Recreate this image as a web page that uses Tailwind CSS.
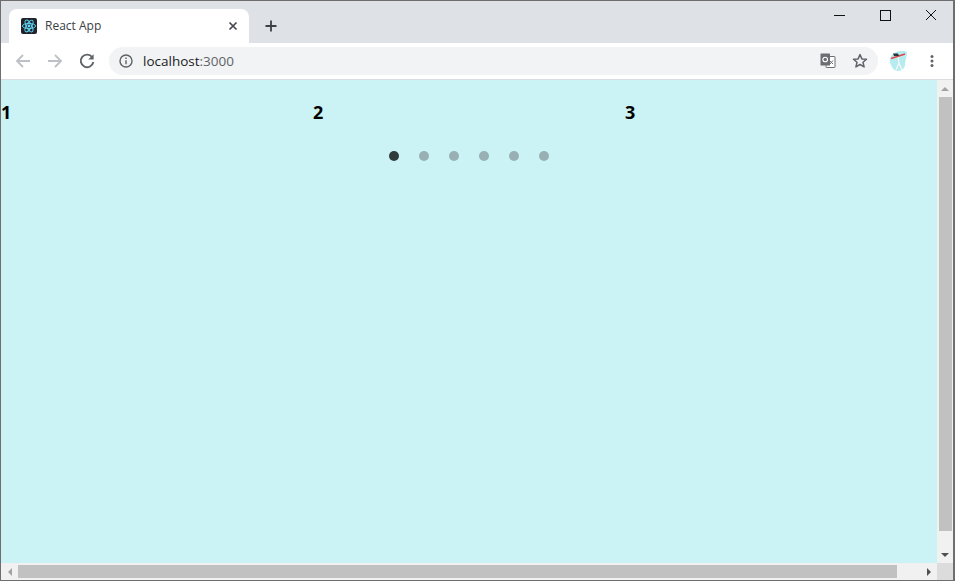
<!DOCTYPE html>
<html lang="en">
<head>
  <meta charset="utf-8" />
  <title>React App</title>
  <script src="https://cdn.jsdelivr.net/npm/@tailwindcss/browser@4"></script>
</head>
<body class="overflow-hidden bg-white">
  <div class="flex h-[581px] w-[955px] flex-col border border-r-2 border-[#6e6e6e] font-['Open_Sans','Noto_Sans',sans-serif]">
    <!-- Tab strip -->
    <div class="flex h-[42px] shrink-0 bg-[#dee1e6]">
      <div class="relative ml-[8px] mt-[8px] flex h-[34px] w-[240px] items-center rounded-t-[8px] bg-white pl-[12px] pr-[11px]">
        <svg class="h-4 w-4 shrink-0" viewBox="0 0 16 16">
          <rect width="16" height="16" rx="2" fill="#20232a" />
          <g fill="none" stroke="#61dafb" stroke-width="0.9">
            <ellipse cx="8" cy="8" rx="6.6" ry="2.6" />
            <ellipse cx="8" cy="8" rx="6.6" ry="2.6" transform="rotate(60 8 8)" />
            <ellipse cx="8" cy="8" rx="6.6" ry="2.6" transform="rotate(120 8 8)" />
          </g>
          <circle cx="8" cy="8" r="1.4" fill="#61dafb" />
        </svg>
        <span class="ml-[8px] text-[12px] text-[#3c4043]">React App</span>
        <svg class="ml-auto h-[10px] w-[10px]" viewBox="0 0 10 10">
          <path d="M1.5 1.5l7 7M8.5 1.5l-7 7" stroke="#45484c" stroke-width="1.7" fill="none" />
        </svg>
      </div>
      <div class="ml-[15px] mt-[18px] h-[14px] w-[14px]">
        <svg class="h-full w-full" viewBox="0 0 14 14">
          <path d="M7 1.5v11M1.5 7h11" stroke="#3c4043" stroke-width="1.8" fill="none" />
        </svg>
      </div>
      <!-- Window controls -->
      <div class="-mr-px ml-auto flex h-[28px] items-center">
        <div class="flex w-[46px] justify-center">
          <svg class="h-[11px] w-[11px]" viewBox="0 0 11 11"><path d="M0 5.5h11" stroke="#111" fill="none" /></svg>
        </div>
        <div class="flex w-[46px] justify-center">
          <svg class="h-[11px] w-[11px]" viewBox="0 0 11 11"><rect x="0.5" y="0.5" width="10" height="10" stroke="#111" fill="none" /></svg>
        </div>
        <div class="flex w-[46px] justify-center">
          <svg class="h-[12px] w-[12px]" viewBox="0 0 12 12"><path d="M1 1l10 10M11 1L1 11" stroke="#111" fill="none" /></svg>
        </div>
      </div>
    </div>

    <!-- Toolbar -->
    <div class="flex h-[37px] shrink-0 items-center border-b border-[#dadce0] bg-white">
      <svg class="ml-[13px] h-[18px] w-[18px]" viewBox="0 0 18 18">
        <path d="M16 9H3M9 3L3 9l6 6" stroke="#bdc0c4" stroke-width="1.8" fill="none" />
      </svg>
      <svg class="ml-[14px] h-[18px] w-[18px]" viewBox="0 0 18 18">
        <path d="M2 9h13M9 3l6 6-6 6" stroke="#bdc0c4" stroke-width="1.8" fill="none" />
      </svg>
      <svg class="ml-[14px] h-[18px] w-[18px]" viewBox="0 0 18 18">
        <path d="M14.2 5.2A6.3 6.3 0 1 0 15.3 10" stroke="#5f6368" stroke-width="1.9" fill="none" />
        <path d="M15.6 2.2v5.3h-5.3z" fill="#5f6368" />
      </svg>
      <!-- Address bar -->
      <div class="ml-[13px] flex h-[28px] w-[769px] items-center rounded-full bg-[#f1f3f4] pl-[10px] pr-[10px]">
        <svg class="h-[14px] w-[14px] shrink-0" viewBox="0 0 14 14">
          <circle cx="7" cy="7" r="6" stroke="#5f6368" stroke-width="1.4" fill="none" />
          <path d="M7 6.2v4M7 3.6v1.5" stroke="#5f6368" stroke-width="1.4" fill="none" />
        </svg>
        <span class="ml-[10px] text-[13.5px] text-[#202124]">localhost<span class="text-[#5f6368]">:3000</span></span>
        <svg class="ml-auto h-[16px] w-[16px]" viewBox="0 0 16 16">
          <rect x="6" y="3.5" width="9" height="11" rx="0.5" fill="#fff" stroke="#6b6e72" />
          <rect x="0.5" y="0.5" width="9.5" height="12" rx="0.5" fill="#6b6e72" />
          <circle cx="5.2" cy="6.5" r="2.3" fill="none" stroke="#fff" stroke-width="1.1" />
          <path d="M9.5 7.5l3.5 3.5M13 7.5l-3 3.5" stroke="#6b6e72" fill="none" />
        </svg>
        <svg class="ml-[16px] h-[16px] w-[16px]" viewBox="0 0 16 16">
          <path d="M8 1.6l1.9 4.3 4.6.4-3.5 3 1.1 4.6L8 11.5l-4.1 2.4L5 9.3l-3.5-3 4.6-.4z" stroke="#5f6368" stroke-width="1.5" stroke-linejoin="round" fill="none" />
        </svg>
      </div>
      <!-- Profile -->
      <svg class="ml-[10px] h-[22px] w-[20px]" viewBox="0 0 20 22">
        <path d="M2 9C3 4 8 1 13 1c3 0 6 0 6 2 0 4-2 7-2 11 0 4-3 7-7 7-3 0-5-2-6-4-1-3-3-5-2-8z" fill="#b5ecef" />
        <path d="M10 7l1 6-3 7M11 13l3 7" stroke="#f6f6f6" stroke-width="1.3" fill="none" />
        <path d="M3 8.5L17 4" stroke="#e0474c" stroke-width="1.7" fill="none" />
        <path d="M5 3.5h5l1 2.5H6z" fill="#28353a" />
      </svg>
      <svg class="ml-[22px] h-[14px] w-[4px]" viewBox="0 0 4 14">
        <circle cx="2" cy="2.5" r="1.5" fill="#5f6368" />
        <circle cx="2" cy="7" r="1.5" fill="#5f6368" />
        <circle cx="2" cy="11.5" r="1.5" fill="#5f6368" />
      </svg>
    </div>

    <!-- Viewport -->
    <div class="flex min-h-0 flex-1">
      <div class="flex min-w-0 flex-1 flex-col">
        <main class="min-h-0 flex-1 bg-[#cbf2f4] pt-[20px]">
          <div class="grid h-[24px] grid-cols-[312px_312px_312px] text-[18px] leading-[24px] font-bold text-black">
            <div>1</div>
            <div>2</div>
            <div>3</div>
          </div>
          <div class="mt-[27px] flex justify-center gap-[20px]">
            <span class="h-[10px] w-[10px] rounded-full bg-[#2f3a3c]"></span>
            <span class="h-[10px] w-[10px] rounded-full bg-[#98b0b4]"></span>
            <span class="h-[10px] w-[10px] rounded-full bg-[#98b0b4]"></span>
            <span class="h-[10px] w-[10px] rounded-full bg-[#98b0b4]"></span>
            <span class="h-[10px] w-[10px] rounded-full bg-[#98b0b4]"></span>
            <span class="h-[10px] w-[10px] rounded-full bg-[#98b0b4]"></span>
          </div>
        </main>
        <!-- Horizontal scrollbar -->
        <div class="flex h-[17px] shrink-0 items-center bg-[#f1f1f1]">
          <div class="flex w-[17px] justify-center">
            <span class="h-0 w-0 border-y-[4px] border-r-[4px] border-y-transparent border-r-[#a3a3a3]"></span>
          </div>
          <div class="h-[13px] w-[879px] bg-[#c1c1c1]"></div>
          <div class="ml-auto flex w-[16px] justify-center">
            <span class="h-0 w-0 border-y-[4px] border-l-[4px] border-y-transparent border-l-[#505050]"></span>
          </div>
        </div>
      </div>
      <!-- Vertical scrollbar -->
      <div class="flex w-[16px] shrink-0 flex-col bg-[#f1f1f1]">
        <div class="flex h-[17px] items-center justify-center">
          <span class="h-0 w-0 border-x-[4px] border-b-[4px] border-x-transparent border-b-[#a3a3a3]"></span>
        </div>
        <div class="ml-[2px] h-[434px] w-[13px] bg-[#c1c1c1]"></div>
        <div class="mt-auto flex h-[17px] items-center justify-center">
          <span class="h-0 w-0 border-x-[4px] border-t-[4px] border-x-transparent border-t-[#505050]"></span>
        </div>
        <div class="h-[17px] bg-[#dcdcdc]"></div>
      </div>
    </div>
  </div>
</body>
</html>
